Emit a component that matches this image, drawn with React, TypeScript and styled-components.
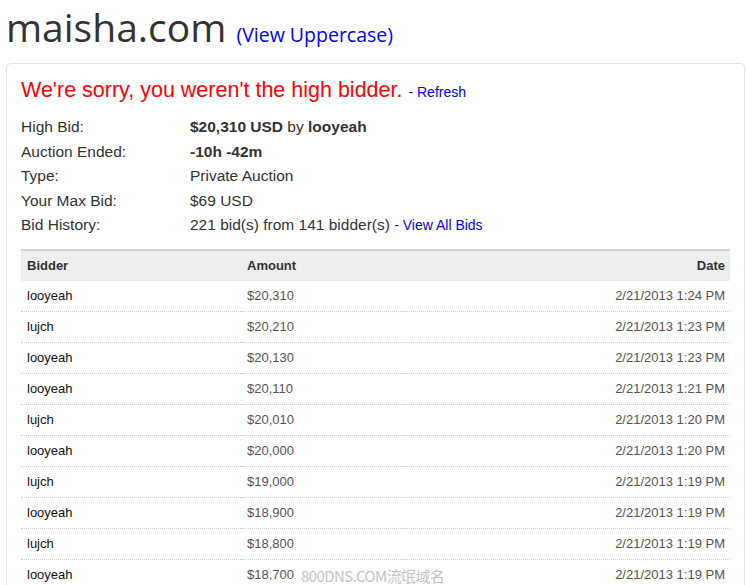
import React, { FC } from "react";
import styled, { createGlobalStyle } from "styled-components";

interface Bid {
  bidder: string;
  amount: string;
  date: string;
}

const bids: Bid[] = [
  { bidder: "looyeah", amount: "$20,310", date: "2/21/2013 1:24 PM" },
  { bidder: "lujch", amount: "$20,210", date: "2/21/2013 1:23 PM" },
  { bidder: "looyeah", amount: "$20,130", date: "2/21/2013 1:23 PM" },
  { bidder: "looyeah", amount: "$20,110", date: "2/21/2013 1:21 PM" },
  { bidder: "lujch", amount: "$20,010", date: "2/21/2013 1:20 PM" },
  { bidder: "looyeah", amount: "$20,000", date: "2/21/2013 1:20 PM" },
  { bidder: "lujch", amount: "$19,000", date: "2/21/2013 1:19 PM" },
  { bidder: "looyeah", amount: "$18,900", date: "2/21/2013 1:19 PM" },
  { bidder: "lujch", amount: "$18,800", date: "2/21/2013 1:19 PM" },
  { bidder: "looyeah", amount: "$18,700", date: "2/21/2013 1:19 PM" },
  { bidder: "lujch", amount: "$18,600", date: "2/21/2013 1:18 PM" },
];

const App: FC = () => {
  return (
    <Page>
      <GlobalStyle />
      <Title>
        maisha.com <Small>(<Link href="#">View Uppercase</Link>)</Small>
      </Title>
      <Card>
        <Sorry>
          We're sorry, you weren't the high bidder. <SmallLink href="#">- Refresh</SmallLink>
        </Sorry>
        <Info>
          <Label>High Bid:</Label>
          <Value>
            <b>$20,310 USD</b> by <b>looyeah</b>
          </Value>
          <Label>Auction Ended:</Label>
          <Value>
            <b>-10h -42m</b>
          </Value>
          <Label>Type:</Label>
          <Value>Private Auction</Value>
          <Label>Your Max Bid:</Label>
          <Value>$69 USD</Value>
          <Label>Bid History:</Label>
          <Value>
            221 bid(s) from 141 bidder(s) <SmallLink href="#">- View All Bids</SmallLink>
          </Value>
        </Info>
        <Table>
          <thead>
            <tr>
              <Th>Bidder</Th>
              <Th>Amount</Th>
              <Th align="right">Date</Th>
            </tr>
          </thead>
          <tbody>
            {bids.map((b, i) => (
              <tr key={i}>
                <Td>{b.bidder}</Td>
                <Td muted>{b.amount}</Td>
                <Td muted align="right">{b.date}</Td>
              </tr>
            ))}
          </tbody>
        </Table>
      </Card>
      <Watermark>800DNS.COM流氓域名</Watermark>
    </Page>
  );
};

const GlobalStyle = createGlobalStyle`
  html, body {
    margin: 0;
    padding: 0;
    overflow: hidden;
    background: #fff;
  }
`;

const Page = styled.div`
  position: relative;
  padding: 0 1px 0 6px;
  font-family: "Liberation Sans", Arial, sans-serif;
  color: #333;
`;

const Title = styled.h1`
  margin: 0 0 10px 0;
  font-family: "Open Sans", sans-serif;
  font-weight: normal;
  font-size: 39px;
  line-height: normal;
  color: #333;
`;

const Small = styled.span`
  font-size: 19.5px;
  color: #00f;
`;

const Link = styled.a`
  color: #00f;
  text-decoration: none;
`;

const SmallLink = styled.a`
  font-family: "Liberation Sans", Arial, sans-serif;
  font-size: 14px;
  color: #00f;
  text-decoration: none;
`;

const Card = styled.section`
  border: 1px solid #e3e3e3;
  border-radius: 5px;
  padding: 14px 14px 20px 14px;
`;

const Sorry = styled.h2`
  margin: 0;
  font-weight: normal;
  font-size: 21.5px;
  line-height: 24px;
  color: #f00;
`;

const Info = styled.div`
  display: grid;
  grid-template-columns: 169px 1fr;
  grid-auto-rows: 24.5px;
  align-items: center;
  margin: 11px 0 11px 0;
  font-size: 15.5px;
  color: #333;
`;

const Label = styled.div`
  color: #333;
`;

const Value = styled.div`
  color: #333;
`;

const Table = styled.table`
  width: 100%;
  border-collapse: collapse;
  border-top: 2px solid #d4d4d4;
  font-size: 13px;
`;

const Th = styled.th<{ align?: string }>`
  height: 30px;
  padding: 0 5px 0 6px;
  background: #eee;
  font-weight: bold;
  color: #333;
  text-align: ${(p) => p.align || "left"};
  &:first-child {
    width: 209px;
  }
`;

const Td = styled.td<{ align?: string; muted?: boolean }>`
  height: 30px;
  padding: 0 5px 0 6px;
  border-bottom: 1px dotted #ccc;
  color: ${(p) => (p.muted ? "#555" : "#111")};
  text-align: ${(p) => p.align || "left"};
`;

const Watermark = styled.div`
  position: absolute;
  left: 301px;
  top: 565px;
  font-family: "Noto Sans CJK SC", sans-serif;
  font-size: 15px;
  color: #c4c4c4;
  letter-spacing: -0.6px;
`;

export default App;
